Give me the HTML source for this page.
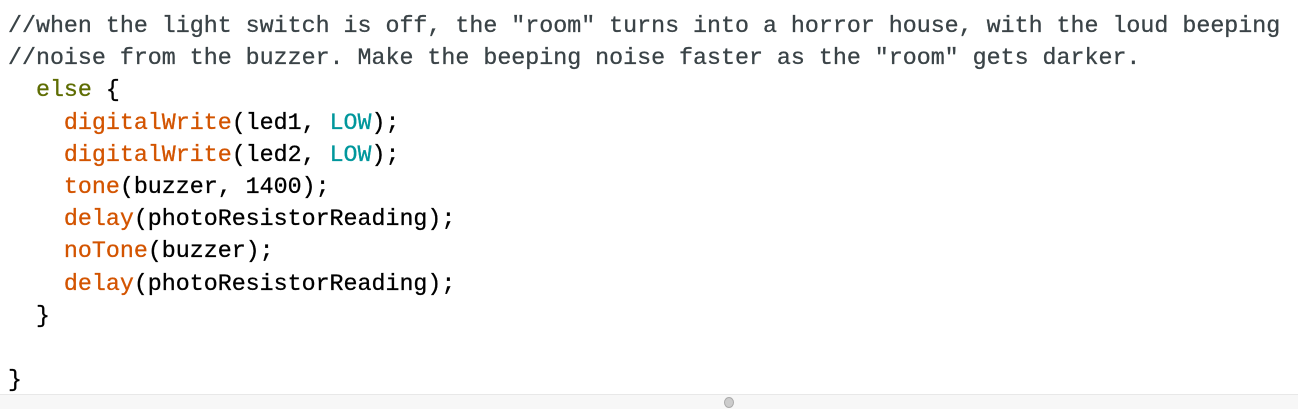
<!DOCTYPE html>
<html><head><style>
html,body{margin:0;padding:0;background:#fff;width:1298px;height:408px;overflow:hidden}
pre{position:absolute;left:8px;top:10px;margin:0;font-family:"Liberation Mono",monospace;font-size:23.3px;line-height:32.2px;color:#000;-webkit-text-stroke:0.3px}
.c{color:#3a4347}.k{color:#5e6d03}.f{color:#d35400}.n{color:#00979c}
.bar{position:absolute;left:0;top:394px;width:1298px;height:14px;background:#f7f7f7;border-top:1px solid #e8e8e8}
.dot{position:absolute;left:724px;top:397px;width:10px;height:11px;border-radius:50%;background:#ccc;border:1px solid #aaa;box-sizing:border-box}
</style></head><body>
<pre><span class="c">//when the light switch is off, the "room" turns into a horror house, with the loud beeping
//noise from the buzzer. Make the beeping noise faster as the "room" gets darker.</span>
  <span class="k">else</span> {
    <span class="f">digitalWrite</span>(led1, <span class="n">LOW</span>);
    <span class="f">digitalWrite</span>(led2, <span class="n">LOW</span>);
    <span class="f">tone</span>(buzzer, 1400);
    <span class="f">delay</span>(photoResistorReading);
    <span class="f">noTone</span>(buzzer);
    <span class="f">delay</span>(photoResistorReading);
  }

}</pre>
<div class="bar"></div><div class="dot"></div>
</body></html>
